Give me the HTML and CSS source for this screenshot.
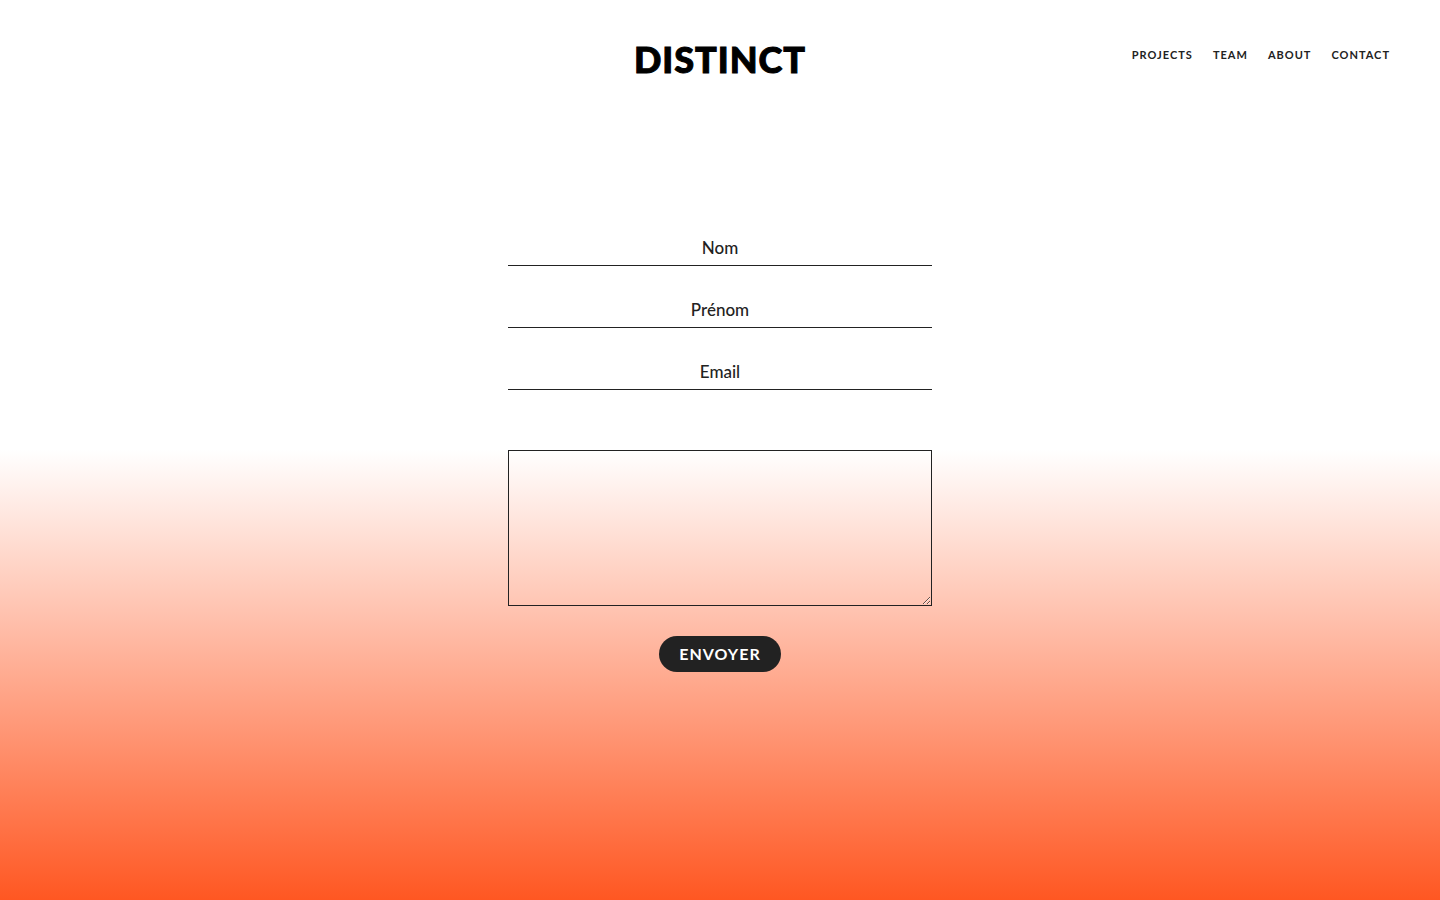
FILE: index.html
```html
<!DOCTYPE html>
<html lang="fr">
<head>
<meta charset="utf-8">
<meta name="viewport" content="width=device-width, initial-scale=1">
<title>Distinct – Contact</title>
<link rel="stylesheet" href="styles.css">
</head>
<body>
<header class="header">
  <a class="logo" href="#">DISTINCT</a>
  <nav class="nav">
    <a href="#">PROJECTS</a>
    <a href="#">TEAM</a>
    <a href="#">ABOUT</a>
    <a href="#">CONTACT</a>
  </nav>
</header>
<main class="main">
  <form class="form">
    <input class="field" type="text" name="nom" placeholder="Nom" aria-label="Nom">
    <input class="field" type="text" name="prenom" placeholder="Prénom" aria-label="Prénom">
    <input class="field" type="email" name="email" placeholder="Email" aria-label="Email">
    <textarea class="message" name="message" aria-label="Message"></textarea>
    <button class="submit" type="submit">ENVOYER</button>
  </form>
</main>
</body>
</html>
```
FILE: styles.css
```css
* {
  box-sizing: border-box;
}

body {
  margin: 0;
  min-height: 100vh;
  color: #222;
  font-family: Lato, sans-serif;
  background: linear-gradient(#fff 50%, #ff5722 100%) no-repeat;
}

.header {
  display: grid;
  grid-template-columns: 1fr auto 1fr;
  align-items: start;
  padding: 40px 50px 0;
}

.logo {
  grid-column: 2;
  color: #000;
  font-size: 36px;
  font-weight: 900;
  line-height: 38px;
  letter-spacing: 1px;
  text-decoration: none;
  -webkit-text-stroke: 1px #000;
}

.nav {
  display: flex;
  justify-content: flex-end;
  gap: 20px;
  padding-top: 5px;
}

.nav a {
  color: inherit;
  font-size: 11px;
  font-weight: 700;
  line-height: 20px;
  letter-spacing: 1px;
  text-decoration: none;
}

.main {
  padding: 152px 20px 60px;
}

.form {
  display: flex;
  flex-direction: column;
  align-items: center;
  gap: 26px;
  width: 100%;
  max-width: 424px;
  margin: 0 auto;
}

.field {
  width: 100%;
  height: 36px;
  padding: 0;
  border: 0;
  border-bottom: 1px solid #222;
  border-radius: 0;
  background: transparent;
  color: #222;
  font: 500 17px Lato, sans-serif;
  text-align: center;
}

.field::placeholder {
  color: #222;
  opacity: 1;
}

.message {
  display: block;
  width: 100%;
  height: 156px;
  margin: 34px 0 4px;
  padding: 10px;
  border: 1px solid #222;
  border-radius: 0;
  background: transparent;
  color: #222;
  font: 500 17px Lato, sans-serif;
  resize: vertical;
}

.submit {
  height: 36px;
  padding: 0 20px 2px;
  border: 0;
  border-radius: 18px;
  background: #222;
  color: #fff;
  font: 700 16px Lato, sans-serif;
  letter-spacing: 1px;
  cursor: pointer;
}
```
